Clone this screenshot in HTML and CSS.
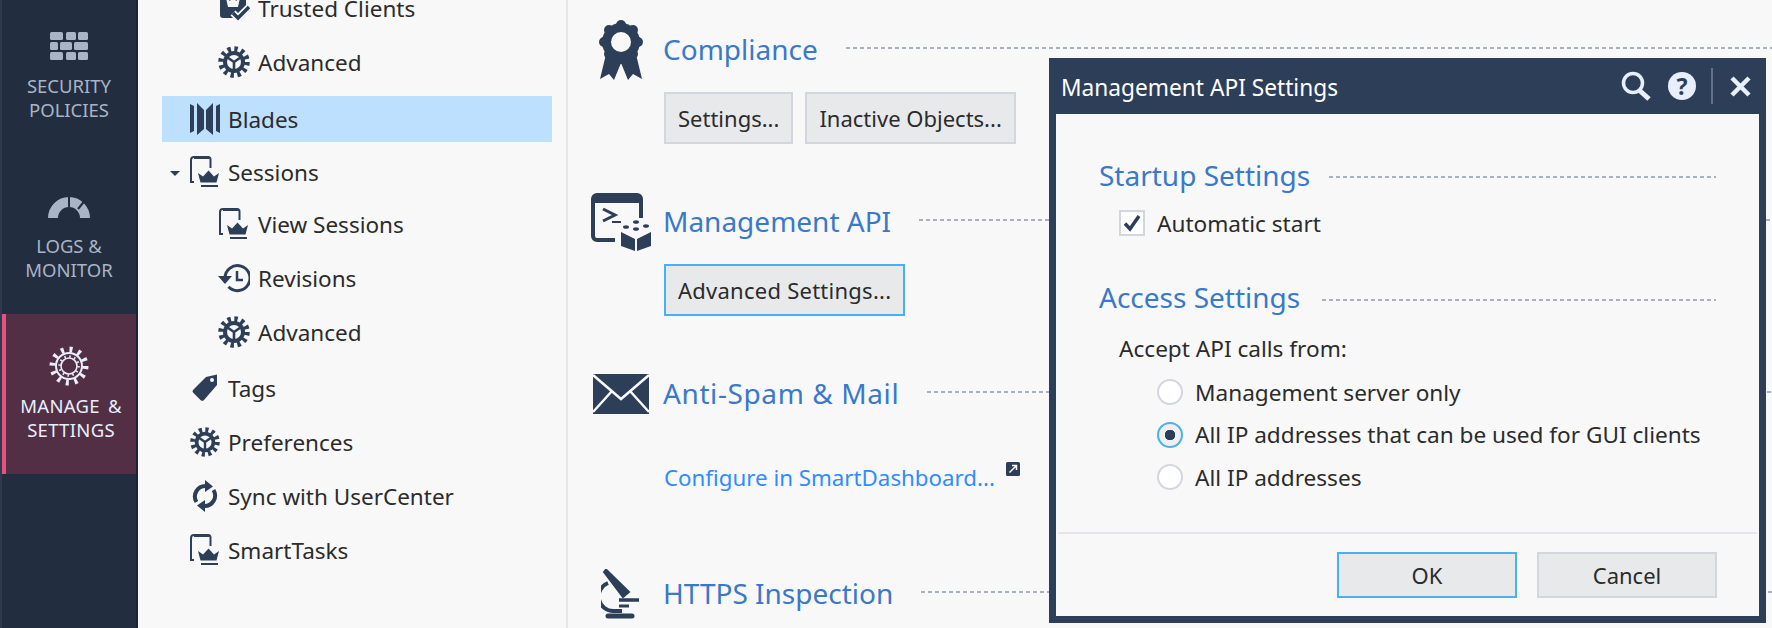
FILE: index.html
```html
<!DOCTYPE html>
<html lang="en">
<head>
  <meta charset="UTF-8">
  <title>Management API Settings</title>
  <link rel="stylesheet" href="styles.css">
</head>
<body>

  <svg class="defs" width="0" height="0">
    <symbol id="i-gear" viewBox="0 0 32 32">
      <circle cx="16" cy="16" r="12.5" fill="none" stroke="#2d3f58" stroke-width="6.5" stroke-dasharray="3.2 3.34"/>
      <circle cx="16" cy="16" r="11" fill="#2d3f58"/>
      <circle cx="16" cy="16" r="7" fill="#f8f8f8"/>
      <path d="M16 16L16 24M16 16L9.5 11.5M16 16L22.5 11.5" stroke="#2d3f58" stroke-width="2.6" fill="none"/>
    </symbol>
    <symbol id="i-session" viewBox="0 0 30 32">
      <path d="M4 26H1V4a3 3 0 0 1 3-3h14a2.5 2.5 0 0 1 2.5 2.5V12" fill="none" stroke="#2d3f58" stroke-width="2"/>
      <path d="M4 1.5H19" stroke="#2d3f58" stroke-width="3"/>
      <path d="M8 17l5 3.5 5.500-6 5.500 6 5-3.500-2.500 9.500H10.500z" fill="#2d3f58"/>
      <rect x="11" y="29" width="17" height="2" fill="#2d3f58"/>
    </symbol>
  </svg>

  <div class="app">
    <nav class="rail">
      <div class="rail-item">
        <div class="rail-icon">
          <svg width="38" height="28" viewBox="0 0 38 28" fill="#a9b4c6">
            <rect x="0" y="0" width="13" height="8" rx="1.500"/><rect x="16" y="0" width="10" height="8" rx="1.500"/><rect x="28" y="0" width="10" height="8" rx="1.500"/>
            <rect x="0" y="10" width="8" height="8" rx="1.500"/><rect x="10" y="10" width="12" height="8" rx="1.500"/><rect x="24" y="10" width="14" height="8" rx="1.500"/>
            <rect x="0" y="20" width="13" height="8" rx="1.500"/><rect x="16" y="20" width="10" height="8" rx="1.500"/><rect x="28" y="20" width="10" height="8" rx="1.500"/>
          </svg>
        </div>
        <div>SECURITY<br>POLICIES</div>
      </div>
      <div class="rail-item">
        <div class="rail-icon">
          <svg width="42" height="23" viewBox="0 0 42 23">
            <path d="M5 23a16 16 0 0 1 32 0" fill="none" stroke="#a9b4c6" stroke-width="10"/>
            <path d="M21 0V12M30 14L36.500 6" stroke="#222d3f" stroke-width="2" fill="none"/>
          </svg>
        </div>
        <div>LOGS &amp;<br>MONITOR</div>
      </div>
      <div class="rail-item rail-active">
        <div class="rail-icon">
          <svg width="40" height="40" viewBox="0 0 40 40" fill="none" stroke="#e6effb">
            <circle cx="20" cy="20" r="16.500" stroke-width="6" stroke-dasharray="3 5.640"/>
            <circle cx="20" cy="20" r="13" stroke-width="2"/>
            <circle cx="20" cy="20" r="8" stroke-width="1.600"/>
            <circle cx="20" cy="20" r="9.500" stroke-width="2.500" stroke-dasharray="1.500 3.470"/>
          </svg>
        </div>
        <div>MANAGE &amp;<br>SETTINGS</div>
      </div>
    </nav>

    <aside class="tree">
      <div class="tree-row sub">
        <span class="icon-box">
          <svg width="32" height="32" viewBox="0 0 32 32">
            <path d="M2 0H28V14L20 26H5a3 3 0 0 1-3-3z" fill="#2d3f58"/>
            <path d="M8 6l4 3 3-5 3 5 4-3-2 9H10z" fill="#f8f8f8"/>
            <path d="M15 21l5 5 11-11" fill="none" stroke="#f8f8f8" stroke-width="7"/>
            <path d="M15 21l5 5 11-11" fill="none" stroke="#2d3f58" stroke-width="3.500"/>
          </svg>
        </span>
        <span>Trusted Clients</span>
      </div>
      <div class="tree-row sub">
        <span class="icon-box"><svg width="32" height="32"><use href="#i-gear"/></svg></span>
        <span>Advanced</span>
      </div>
      <div class="tree-row selected">
        <span class="icon-box">
          <svg width="30" height="32" viewBox="0 0 30 32" fill="#2d3f58">
            <path d="M0 1L4 3V28L0 30zM7 0L14 7V26L7 32zM23 0L16 7V26L23 32zM26 3L30 1V30L26 28z"/>
          </svg>
        </span>
        <span>Blades</span>
      </div>
      <div class="tree-row">
        <span class="caret"></span>
        <span class="icon-box"><svg width="30" height="32"><use href="#i-session"/></svg></span>
        <span>Sessions</span>
      </div>
      <div class="tree-row sub first-child-row">
        <span class="icon-box"><svg width="30" height="32"><use href="#i-session"/></svg></span>
        <span>View Sessions</span>
      </div>
      <div class="tree-row sub">
        <span class="icon-box">
          <svg width="32" height="30" viewBox="0 0 32 30" fill="none" stroke="#2d3f58">
            <path d="M7 15a12.500 12.500 0 1 1 3.500 8.800" stroke-width="3"/>
            <path d="M0 13H14L7 21z" fill="#2d3f58" stroke="none"/>
            <path d="M19 8V17H25" stroke-width="2.500"/>
          </svg>
        </span>
        <span>Revisions</span>
      </div>
      <div class="tree-row sub">
        <span class="icon-box"><svg width="32" height="32"><use href="#i-gear"/></svg></span>
        <span>Advanced</span>
      </div>
      <div class="tree-row after-group">
        <span class="icon-box">
          <svg width="26" height="28" viewBox="0 0 26 28">
            <path d="M14 3L25 0.500V11L12 26a2.500 2.500 0 0 1-3.500 0L1.500 19a2.500 2.500 0 0 1 0-3.500z" fill="#2d3f58"/>
            <circle cx="20" cy="6" r="2" fill="#f8f8f8"/>
          </svg>
        </span>
        <span>Tags</span>
      </div>
      <div class="tree-row">
        <span class="icon-box"><svg width="32" height="32"><use href="#i-gear"/></svg></span>
        <span>Preferences</span>
      </div>
      <div class="tree-row">
        <span class="icon-box">
          <svg width="26" height="32" viewBox="0 0 26 32" fill="none" stroke="#2d3f58" stroke-width="4">
            <path d="M4.500 22A10.500 10.500 0 0 1 14 6"/>
            <path d="M21.500 10A10.500 10.500 0 0 1 12 26"/>
            <path d="M13 0L21 6.500 13 12z" fill="#2d3f58" stroke="none"/>
            <path d="M13 20L5 25.500 13 32z" fill="#2d3f58" stroke="none"/>
          </svg>
        </span>
        <span>Sync with UserCenter</span>
      </div>
      <div class="tree-row">
        <span class="icon-box"><svg width="30" height="32"><use href="#i-session"/></svg></span>
        <span>SmartTasks</span>
      </div>
    </aside>

    <main class="main">
      <section class="section">
        <div class="section-head">
          <div class="section-icon">
            <svg width="44" height="60" viewBox="0 0 44 60" fill="#2d3f58">
              <path d="M8 30L1 59l9-5 5 6 7-17 7 17 5-6 9 5-7-29z"/>
              <circle cx="22" cy="22" r="19"/>
              <circle cx="22" cy="5" r="5"/><circle cx="34" cy="10" r="5"/><circle cx="39" cy="22" r="5"/><circle cx="34" cy="34" r="5"/>
              <circle cx="22" cy="39" r="5"/><circle cx="10" cy="34" r="5"/><circle cx="5" cy="22" r="5"/><circle cx="10" cy="10" r="5"/>
              <circle cx="22" cy="22" r="10" fill="#f8f8f8"/>
            </svg>
          </div>
          <h2 class="section-title">Compliance</h2>
          <div class="dash"></div>
        </div>
        <div class="section-body">
          <button class="btn" type="button">Settings...</button>
          <button class="btn" type="button">Inactive Objects...</button>
        </div>
      </section>

      <section class="section">
        <div class="section-head">
          <div class="section-icon">
            <svg width="60" height="58" viewBox="0 0 60 58">
              <path d="M24 47H6a4 4 0 0 1-4-4V6a4 4 0 0 1 4-4h40a4 4 0 0 1 4 4v19" fill="none" stroke="#2d3f58" stroke-width="4"/>
              <path d="M4 3H49V10H4z" fill="#2d3f58"/>
              <path d="M12 16L24 22 12 28" fill="none" stroke="#2d3f58" stroke-width="3"/>
              <path d="M21 29H30" stroke="#2d3f58" stroke-width="2"/>
              <path d="M30 39L44 46V58L30 53zM60 39L46 46V58L60 53z" fill="#2d3f58"/>
              <ellipse cx="35" cy="34" rx="3" ry="1.800" fill="#2d3f58"/><ellipse cx="45" cy="29" rx="3" ry="1.800" fill="#2d3f58"/>
              <ellipse cx="45" cy="36" rx="3" ry="1.800" fill="#2d3f58"/><ellipse cx="55" cy="33" rx="3" ry="1.800" fill="#2d3f58"/>
            </svg>
          </div>
          <h2 class="section-title">Management API</h2>
          <div class="dash"></div>
        </div>
        <div class="section-body">
          <button class="btn btn-focus btn-wide" type="button">Advanced Settings...</button>
        </div>
      </section>

      <section class="section">
        <div class="section-head">
          <div class="section-icon">
            <svg width="56" height="40" viewBox="0 0 56 40">
              <rect width="56" height="40" fill="#2d3f58"/>
              <path d="M0 1L28 25 56 1M0 38L19 17M56 38L37 17" fill="none" stroke="#f8f8f8" stroke-width="2.500"/>
            </svg>
          </div>
          <h2 class="section-title title-wide">Anti-Spam &amp; Mail</h2>
          <div class="dash"></div>
        </div>
        <div class="section-body link-row">
          <a class="link" href="#">Configure in SmartDashboard...</a>
          <svg class="ext-icon" width="14" height="14" viewBox="0 0 14 14">
            <rect width="14" height="14" rx="1.500" fill="#2d3f58"/>
            <path d="M3.500 10.500L10 4M6 3.500H10.500V8" fill="none" stroke="#f8f8f8" stroke-width="1.500"/>
          </svg>
        </div>
      </section>

      <section class="section">
        <div class="section-head">
          <div class="section-icon">
            <svg width="40" height="50" viewBox="0 0 40 50" fill="none" stroke="#2d3f58">
              <path d="M3 3L5 0.500 28 23 22 28z" fill="#2d3f58" stroke-width="2"/>
              <path d="M7 14a14.500 14.500 0 0 0 6 28h8" stroke-width="4"/>
              <path d="M18 31H38" stroke-width="3.500"/>
              <path d="M18 37H28" stroke-width="3"/>
              <path d="M7 47H31" stroke-width="5" stroke-linecap="round"/>
            </svg>
          </div>
          <h2 class="section-title">HTTPS Inspection</h2>
          <div class="dash"></div>
        </div>
      </section>
    </main>
  </div>

  <div class="dialog">
    <header class="dialog-bar">
      <div class="dialog-title">Management API Settings</div>
      <svg class="bar-search" width="30" height="30" viewBox="0 0 30 30" fill="none" stroke="#e6effb">
        <circle cx="12" cy="12" r="9.500" stroke-width="3.500"/>
        <path d="M18 19L28 28" stroke-width="5"/>
      </svg>
      <span class="bar-help">?</span>
      <span class="bar-sep"></span>
      <svg class="bar-close" width="21" height="21" viewBox="0 0 21 21">
        <path d="M2 2L19 19M19 2L2 19" stroke="#e6effb" stroke-width="4.500" fill="none"/>
      </svg>
    </header>

    <div class="dialog-body">
      <div class="group-head">
        <h3 class="group-title">Startup Settings</h3>
        <div class="dash"></div>
      </div>
      <div class="check-row">
        <span class="check">
          <svg width="20" height="20" viewBox="0 0 20 20">
            <path d="M3 10.500L8 16 17 3" fill="none" stroke="#2d3f58" stroke-width="3.500"/>
          </svg>
        </span>
        <span>Automatic start</span>
      </div>

      <div class="group-head access">
        <h3 class="group-title">Access Settings</h3>
        <div class="dash"></div>
      </div>
      <div class="accept">Accept API calls from:</div>
      <div class="radios">
        <div class="radio-row"><span class="radio"></span><span>Management server only</span></div>
        <div class="radio-row"><span class="radio radio-on"></span><span>All IP addresses that can be used for GUI clients</span></div>
        <div class="radio-row"><span class="radio"></span><span>All IP addresses</span></div>
      </div>
    </div>

    <footer class="dialog-foot">
      <button class="btn btn-foot btn-focus" type="button">OK</button>
      <button class="btn btn-foot" type="button">Cancel</button>
    </footer>
  </div>

</body>
</html>
```

FILE: styles.css
```css
html, body {
  margin: 0;
  height: 100%;
}

body {
  font-family: "Noto Sans", "Open Sans", sans-serif;
  background-color: #f8f8f8;
  color: #2b2b2b;
  overflow: hidden;
  position: relative;
}

.defs {
  position: absolute;
}

.app {
  display: flex;
  height: 628px;
}

/* left rail */
.rail {
  width: 134px;
  flex-shrink: 0;
  background-color: #222d3f;
  border-left: 2px solid #2e3a4d;
  border-right: 2px solid #1b2432;
  color: #a9b4c6;
  font-size: 18.5px;
  line-height: 24px;
  text-align: center;
  margin-top: -6px;
  height: 634px;
}

.rail-item {
  height: 128px;
  padding-top: 32px;
}

.rail-icon {
  height: 40px;
  margin-bottom: 8px;
  display: flex;
  align-items: center;
  justify-content: center;
}

.rail-active {
  background-color: #532f46;
  border-left: 4px solid #e8507f;
  color: #e6effb;
  width: 130px;
  word-spacing: 3px;
  letter-spacing: 0.3px;
}

.rail-active .rail-icon {
  padding-right: 5px;
}

/* tree panel */
.tree {
  width: 430px;
  flex-shrink: 0;
  box-sizing: border-box;
  border-right: 2px solid #e6e7e9;
  padding: 0 14px 0 24px;
  margin-top: -19px;
  font-size: 22.5px;
}

.tree-row {
  height: 54px;
  display: flex;
  align-items: center;
  gap: 8px;
  padding-left: 28px;
  position: relative;
}

.tree-row.sub {
  padding-left: 56px;
}

.tree-row.sub .icon-box {
  width: 32px;
}

.tree-row.selected {
  background-color: #bde0ff;
  height: 46px;
  margin: 7px 0 3px;
}

.first-child-row {
  margin-top: -2px;
}

.after-group {
  margin-top: 2px;
}

.icon-box {
  width: 30px;
  flex-shrink: 0;
  display: flex;
  justify-content: center;
}

.caret {
  position: absolute;
  left: 8px;
  top: 26px;
  border-left: 5px solid transparent;
  border-right: 5px solid transparent;
  border-top: 5px solid #2d3f58;
}

/* main area */
.main {
  flex: 1;
  padding-top: 20px;
  min-width: 0;
}

.section {
  margin-bottom: 48px;
}

.section-head {
  display: flex;
  align-items: center;
  height: 60px;
}

.section-icon {
  width: 64px;
  margin: 0 10px 0 21px;
  flex-shrink: 0;
  display: flex;
  justify-content: center;
}

.section-title {
  margin: 0 28px 0 0;
  padding-bottom: 2px;
  font-size: 28px;
  font-weight: 400;
  color: #3a78c9;
  white-space: nowrap;
}

.title-wide {
  letter-spacing: 0.6px;
}

.dash {
  flex: 1;
  height: 2px;
  margin-top: -4px;
  background: repeating-linear-gradient(90deg, #a9b1c0 0 4px, transparent 4px 7px);
}

.section-body {
  display: flex;
  gap: 12px;
  margin: 12px 0 0 96px;
}

.btn {
  font-family: inherit;
  font-size: 22px;
  color: #2b2b2b;
  height: 52px;
  padding: 0 12px;
  background-color: #e8e9eb;
  border: 2px solid #d3d6dc;
  white-space: nowrap;
}

.btn-focus {
  border-color: #4bb0ef;
}

.btn-wide {
  letter-spacing: 0.25px;
}

.link-row {
  padding-top: 16px;
  height: 64px;
  gap: 11px;
}

.link {
  color: #2f8cff;
  font-size: 22.3px;
  line-height: 52px;
  text-decoration: none;
}

.ext-icon {
  margin-top: 10px;
}

/* dialog */
.dialog {
  position: absolute;
  left: 1049px;
  top: 58px;
  width: 703px;
  height: 558px;
  background-color: #f8f8f8;
  border: 7px solid #2d3f58;
  border-top: 0;
  display: flex;
  flex-direction: column;
}

.dialog-bar {
  background-color: #2d3f58;
  height: 56px;
  display: flex;
  align-items: center;
  color: #fff;
  flex-shrink: 0;
  padding-left: 5px;
}

.dialog-title {
  font-size: 22.7px;
  flex: 1;
  padding-top: 2px;
}

.bar-search {
  margin-right: 16px;
}

.bar-help {
  width: 28px;
  height: 28px;
  border-radius: 50%;
  background-color: #e6effb;
  color: #2d3f58;
  font-size: 23px;
  font-weight: 700;
  line-height: 28px;
  text-align: center;
  margin-left: 1px;
}

.bar-sep {
  width: 2px;
  height: 36px;
  background-color: #65738a;
  margin: 0 17px 0 15px;
}

.bar-close {
  margin-right: 8px;
}

.dialog-body {
  flex: 1;
  padding: 42px 43px 0;
  font-size: 22.6px;
}

.group-head {
  display: flex;
  align-items: center;
  height: 38px;
}

.group-title {
  margin: 0 19px 0 0;
  font-size: 28px;
  font-weight: 400;
  color: #3a78c9;
  white-space: nowrap;
}

.group-head .dash {
  margin-top: 4px;
}

.group-head.access {
  margin-top: 40px;
}

.group-head.access .group-title {
  margin-right: 22px;
}

.group-head.access .dash {
  margin-top: 6px;
}

.check-row {
  display: flex;
  align-items: center;
  gap: 12px;
  margin: 14px 0 0 20px;
  height: 30px;
}

.check {
  box-sizing: border-box;
  width: 26px;
  height: 26px;
  border: 2px solid #d3d6dc;
  background-color: #fff;
  display: flex;
  align-items: center;
  justify-content: center;
}

.accept {
  margin: 18px 0 0 20px;
  line-height: 30px;
}

.radios {
  margin: 7px 0 0 58px;
}

.radio-row {
  display: flex;
  align-items: center;
  gap: 12px;
  height: 42.5px;
}

.radio {
  box-sizing: border-box;
  width: 26px;
  height: 26px;
  border: 2px solid #d3d6dc;
  border-radius: 50%;
  background-color: #fff;
}

.radio-on {
  border-color: #4bb0ef;
  background: radial-gradient(circle, #2d3f58 0 5px, #eef0f3 5.500px);
}

.dialog-foot {
  flex-shrink: 0;
  box-sizing: border-box;
  height: 84px;
  margin: 0 2px;
  border-top: 2px solid #e3e5e9;
  display: flex;
  justify-content: flex-end;
  align-items: flex-start;
  gap: 20px;
  padding: 18px 40px 0 0;
}

.btn-foot {
  width: 180px;
  height: 46px;
}
```
